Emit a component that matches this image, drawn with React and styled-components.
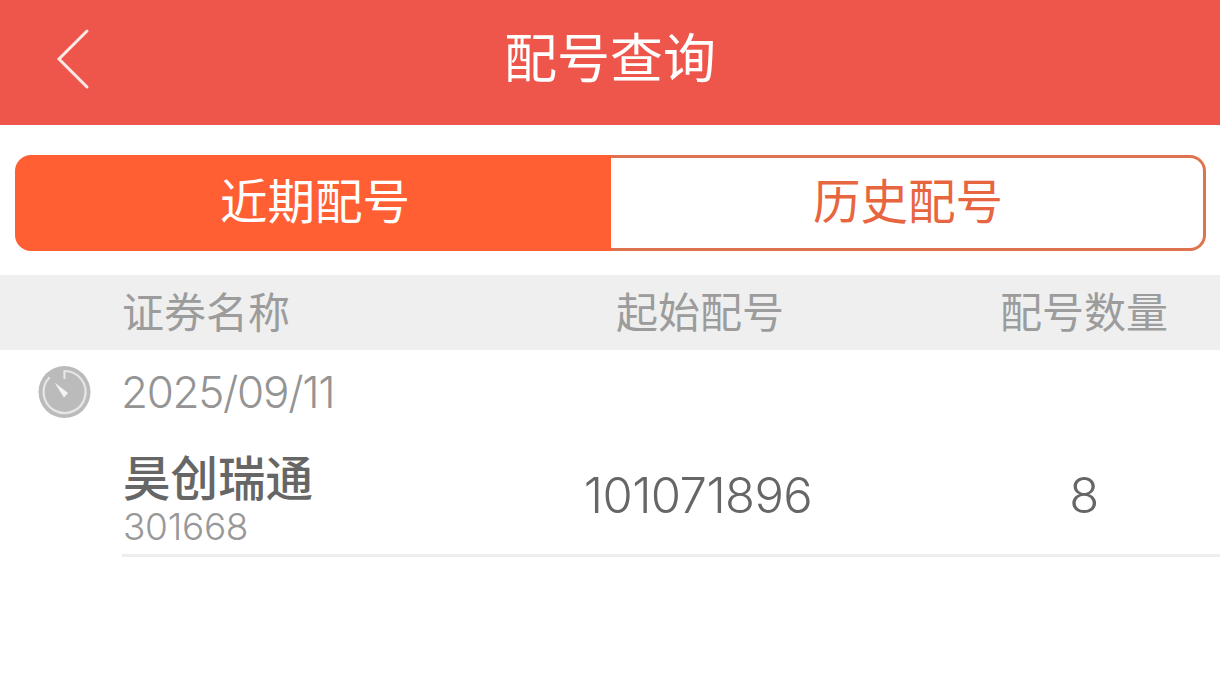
import React from "react";
import styled, { createGlobalStyle } from "styled-components";

const GlobalStyle = createGlobalStyle`
  html, body {
    margin: 0;
    padding: 0;
    background: #fff;
    font-family: "Inter", "Noto Sans CJK SC", sans-serif;
  }
`;

const Page = styled.div`
  width: 1220px;
  height: 684px;
  overflow: hidden;
  background: #fff;
`;

const Header = styled.header`
  height: 125px;
  background: #ee554b;
  display: flex;
  align-items: center;
  justify-content: center;
  position: relative;
`;

const BackIcon = styled.svg`
  position: absolute;
  left: 54px;
  top: 27px;
`;

const Title = styled.h1`
  margin: 0;
  color: #fff;
  font-size: 53px;
  font-weight: 400;
  line-height: 1;
  position: relative;
  top: -3px;
`;

const Tabs = styled.div`
  margin: 30px 14px 24px 15px;
  height: 96px;
  display: grid;
  grid-template-columns: 596px 1fr;
`;

const Tab = styled.div`
  display: flex;
  align-items: center;
  justify-content: center;
  box-sizing: border-box;
  font-size: 47.5px;
  line-height: 1;
  padding-bottom: 3px;
  padding-left: ${(p) => (p.$active ? 4 : 2)}px;
  border: 3px solid ${(p) => (p.$active ? "#ff5f33" : "#e0734f")};
  border-left-width: ${(p) => (p.$active ? 3 : 0)}px;
  border-radius: ${(p) => (p.$active ? "16px 0 0 16px" : "0 16px 16px 0")};
  background: ${(p) => (p.$active ? "#ff5f33" : "#fff")};
  color: ${(p) => (p.$active ? "#fff" : "#e8663f")};
`;

const HeadRow = styled.div`
  height: 75px;
  background: #efefef;
  display: grid;
  grid-template-columns: 122px 362px 428px 1fr;
  align-items: center;
  color: #9c9c9c;
  font-size: 42px;
  line-height: 1;
`;

const Cell = styled.div`
  text-align: ${(p) => p.$align || "left"};
  grid-column: ${(p) => p.$col};
  padding-left: ${(p) => p.$pad || 0}px;
`;

const DateRow = styled.div`
  height: 88px;
  box-sizing: border-box;
  padding: 0 0 4px 38px;
  display: flex;
  align-items: center;
  gap: 30px;
`;

const DateText = styled.div`
  color: #949494;
  font-size: 44px;
  font-weight: 300;
  letter-spacing: -1.3px;
  line-height: 1;
`;

const StockRow = styled.div`
  margin-left: 122px;
  height: 119px;
  box-sizing: border-box;
  border-bottom: 3px solid #eeeeee;
  display: grid;
  grid-template-columns: 362px 428px 1fr;
  align-items: center;
`;

const NameBlock = styled.div`
  padding-top: 8px;
`;

const StockName = styled.div`
  color: #666;
  font-size: 47.5px;
  font-weight: 500;
  line-height: 50px;
  margin-left: 1px;
`;

const StockCode = styled.div`
  color: #989898;
  font-size: 37px;
  font-weight: 300;
  letter-spacing: -0.3px;
  line-height: 40px;
  margin: 3px 0 0 1px;
`;

const Value = styled.div`
  color: #666;
  font-size: 49px;
  font-weight: 300;
  letter-spacing: -0.6px;
  line-height: 1;
  text-align: center;
  padding-left: ${(p) => p.$pad || 0}px;
  padding-bottom: 2px;
`;

function ClockIcon() {
  return (
    <svg width="53" height="53" viewBox="0 0 53 53">
      <circle cx="26.5" cy="26" r="26" fill="#bbbbbb" />
      <path
        d="M26.5 13V5A21 21 0 1 1 11.7 11.2"
        fill="none"
        stroke="#e6e6e6"
        strokeWidth="2.2"
      />
      <path d="M16.5 16.5L30 27l-4 4.5z" fill="#f4f4f4" />
    </svg>
  );
}

export default function App() {
  return (
    <Page>
      <GlobalStyle />
      <Header>
        <BackIcon width="40" height="66" viewBox="0 0 40 66">
          <path
            d="M33 4L5 32l28 28"
            fill="none"
            stroke="#ffe9e6"
            strokeWidth="3"
            strokeLinecap="round"
          />
        </BackIcon>
        <Title>配号查询</Title>
      </Header>
      <Tabs>
        <Tab $active>近期配号</Tab>
        <Tab>历史配号</Tab>
      </Tabs>
      <HeadRow>
        <Cell $col="2">证券名称</Cell>
        <Cell $col="3" $align="center" $pad={4}>起始配号</Cell>
        <Cell $col="4" $align="center" $pad={36}>配号数量</Cell>
      </HeadRow>
      <DateRow>
        <ClockIcon />
        <DateText>2025/09/11</DateText>
      </DateRow>
      <StockRow>
        <NameBlock>
          <StockName>昊创瑞通</StockName>
          <StockCode>301668</StockCode>
        </NameBlock>
        <Value>101071896</Value>
        <Value $pad={36}>8</Value>
      </StockRow>
    </Page>
  );
}
